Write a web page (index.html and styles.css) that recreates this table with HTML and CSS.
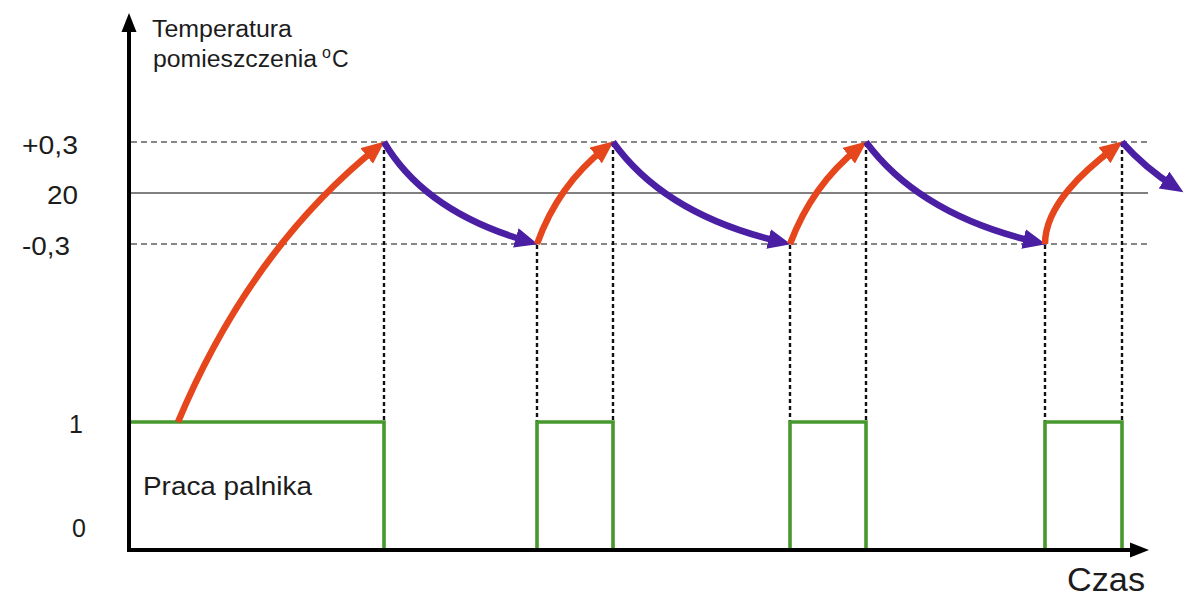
FILE: index.html
```
<!DOCTYPE html>
<html lang="pl">
<head>
<meta charset="utf-8">
<title>Praca palnika</title>
<link rel="stylesheet" href="styles.css">
</head>
<body>
<div class="chart">
<svg class="chart-svg" width="1200" height="606" viewBox="0 0 1200 606" xmlns="http://www.w3.org/2000/svg">
  <defs>
    <marker id="hr" markerUnits="userSpaceOnUse" markerWidth="24" markerHeight="20" refX="13" refY="10" orient="auto">
      <path class="head-red" d="M0,0 L23,10 L0,20 z"/>
    </marker>
    <marker id="hp" markerUnits="userSpaceOnUse" markerWidth="24" markerHeight="20" refX="13" refY="10" orient="auto">
      <path class="head-purple" d="M0,0 L23,10 L0,20 z"/>
    </marker>
  </defs>

  <!-- reference lines -->
  <line class="dash" x1="131" y1="142" x2="1148" y2="142"/>
  <line class="solid" x1="131" y1="193" x2="1148" y2="193"/>
  <line class="dash" x1="131" y1="244" x2="1148" y2="244"/>

  <!-- vertical dotted lines -->
  <line class="dot" x1="384" y1="143" x2="384" y2="421"/>
  <line class="dot" x1="537" y1="245" x2="537" y2="421"/>
  <line class="dot" x1="613" y1="143" x2="613" y2="421"/>
  <line class="dot" x1="790" y1="245" x2="790" y2="421"/>
  <line class="dot" x1="866" y1="143" x2="866" y2="421"/>
  <line class="dot" x1="1045" y1="245" x2="1045" y2="421"/>
  <line class="dot" x1="1122" y1="143" x2="1122" y2="421"/>

  <!-- burner signal -->
  <polyline class="burner" points="131,422 384,422 384,550"/>
  <polyline class="burner" points="537,550 537,422 613,422 613,550"/>
  <polyline class="burner" points="790,550 790,422 866,422 866,550"/>
  <polyline class="burner" points="1045,550 1045,422 1122,422 1122,550"/>

  <!-- temperature curves -->
  <path class="heat" marker-end="url(#hr)" d="M178,422 Q250,250 376.8,147.8"/>
  <path class="cool" marker-end="url(#hp)" d="M384,142 Q425,212 528.3,241.5"/>
  <path class="heat" marker-end="url(#hr)" d="M537,244 Q558,185 605.9,147.5"/>
  <path class="cool" marker-end="url(#hp)" d="M613,142 Q665,215 781.2,242"/>
  <path class="heat" marker-end="url(#hr)" d="M790,244 Q812,185 858.9,147.7"/>
  <path class="cool" marker-end="url(#hp)" d="M866,142 Q920,215 1036.2,242"/>
  <path class="heat" marker-end="url(#hr)" d="M1045,244 C1045,205 1085,170 1114.8,147.4"/>
  <path class="cool" marker-end="url(#hp)" d="M1122,142 Q1145,168 1175,187"/>

  <!-- axes -->
  <line class="axis" x1="129" y1="552" x2="129" y2="28"/>
  <polygon class="axis-head" points="129,13 121.5,32 136.5,32"/>
  <line class="axis" x1="127" y1="550" x2="1134" y2="550"/>
  <polygon class="axis-head" points="1149,550 1130,542.5 1130,557.5"/>

  <!-- labels -->
  <text class="lbl title" x="152" y="37" textLength="140" lengthAdjust="spacingAndGlyphs">Temperatura</text>
  <text class="lbl title" x="153" y="67"><tspan textLength="164" lengthAdjust="spacingAndGlyphs">pomieszczenia</tspan><tspan class="sup" x="322" y="58">o</tspan><tspan x="332" y="67">C</tspan></text>

  <text class="lbl tick" x="22" y="154" textLength="56" lengthAdjust="spacingAndGlyphs">+0,3</text>
  <text class="lbl tick" x="47" y="204" textLength="31" lengthAdjust="spacingAndGlyphs">20</text>
  <text class="lbl tick" x="22" y="255" textLength="48" lengthAdjust="spacingAndGlyphs">-0,3</text>
  <text class="lbl tick" x="69" y="433">1</text>
  <text class="lbl tick" x="72" y="537">0</text>

  <text class="lbl burner-label" x="143" y="495" textLength="169" lengthAdjust="spacingAndGlyphs">Praca palnika</text>
  <text class="lbl time" x="1067" y="591" textLength="78" lengthAdjust="spacingAndGlyphs">Czas</text>
</svg>
</div>
</body>
</html>
```
FILE: styles.css
```
html, body {
  margin: 0;
  padding: 0;
  background: #ffffff;
}

.chart {
  width: 1200px;
  height: 606px;
  overflow: hidden;
}

.chart-svg {
  display: block;
}

.dash {
  stroke: #606060;
  stroke-width: 1.4;
  stroke-dasharray: 6 4;
}

.solid {
  stroke: #808080;
  stroke-width: 1.8;
}

.dot {
  stroke: #111111;
  stroke-width: 2.4;
  stroke-dasharray: 4 3;
}

.burner {
  fill: none;
  stroke: #47982d;
  stroke-width: 3.6;
  stroke-linejoin: miter;
}

.heat {
  fill: none;
  stroke: #e6461b;
  stroke-width: 6.5;
}

.cool {
  fill: none;
  stroke: #4a1fa4;
  stroke-width: 6.5;
}

.head-red {
  fill: #e6461b;
}

.head-purple {
  fill: #4a1fa4;
}

.axis {
  stroke: #000000;
  stroke-width: 4;
}

.axis-head {
  fill: #000000;
}

.lbl {
  font-family: "Liberation Sans", Arial, sans-serif;
  fill: #1c1c1c;
}

.title {
  font-size: 23px;
}

.sup {
  font-size: 16px;
}

.tick {
  font-size: 25px;
}

.burner-label {
  font-size: 26px;
}

.time {
  font-size: 33px;
}
```
